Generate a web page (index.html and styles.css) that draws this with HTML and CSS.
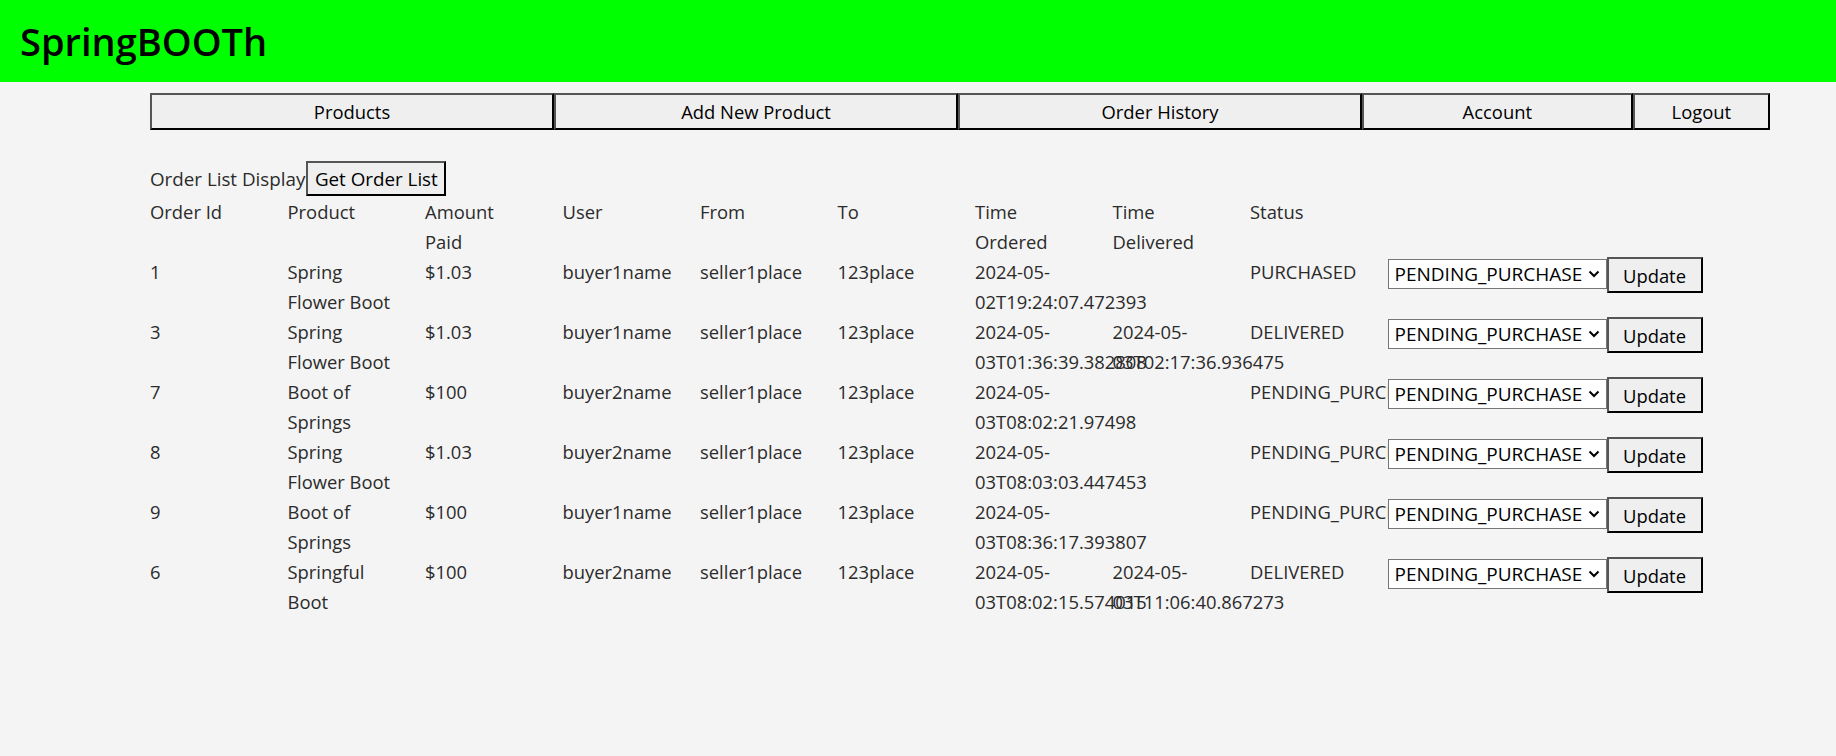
FILE: index.html
```html
<!DOCTYPE html>
<html lang="en">
<head>
<meta charset="utf-8">
<title>SpringBOOTh</title>
<link rel="stylesheet" href="styles.css">
</head>
<body>
<header class="topbar">
  <h1 class="brand">SpringBOOTh</h1>
</header>
<main class="content">
  <nav class="nav">
    <button class="nav-btn wide">Products</button>
    <button class="nav-btn wide">Add New Product</button>
    <button class="nav-btn wide">Order History</button>
    <button class="nav-btn mid">Account</button>
    <button class="nav-btn narrow">Logout</button>
  </nav>

  <div class="toolbar">
    <span class="toolbar-label">Order List Display</span>
    <button class="btn get-btn">Get Order List</button>
  </div>

  <div class="orders">
    <div class="row">
      <div class="cell">Order Id</div>
      <div class="cell">Product</div>
      <div class="cell">Amount Paid</div>
      <div class="cell">User</div>
      <div class="cell">From</div>
      <div class="cell">To</div>
      <div class="cell">Time Ordered</div>
      <div class="cell">Time Delivered</div>
      <div class="cell">Status</div>
    </div>

    <div class="row">
      <div class="cell">1</div>
      <div class="cell">Spring Flower Boot</div>
      <div class="cell">$1.03</div>
      <div class="cell">buyer1name</div>
      <div class="cell">seller1place</div>
      <div class="cell">123place</div>
      <div class="cell">2024-05-<wbr>02T19:24:07.472393</div>
      <div class="cell"></div>
      <div class="cell">PURCHASED</div>
      <span class="select-wrap"><select class="status-select"><option>PENDING_PURCHASE</option><option>PURCHASED</option><option>DELIVERED</option></select><svg class="chev" width="12" height="8" viewBox="0 0 12 8"><path d="M1.5 1.5 L6 6 L10.5 1.5" fill="none" stroke="#000" stroke-width="2"/></svg></span>
      <button class="btn update-btn">Update</button>
    </div>

    <div class="row">
      <div class="cell">3</div>
      <div class="cell">Spring Flower Boot</div>
      <div class="cell">$1.03</div>
      <div class="cell">buyer1name</div>
      <div class="cell">seller1place</div>
      <div class="cell">123place</div>
      <div class="cell">2024-05-<wbr>03T01:36:39.382808</div>
      <div class="cell">2024-05-<wbr>03T02:17:36.936475</div>
      <div class="cell">DELIVERED</div>
      <span class="select-wrap"><select class="status-select"><option>PENDING_PURCHASE</option><option>PURCHASED</option><option>DELIVERED</option></select><svg class="chev" width="12" height="8" viewBox="0 0 12 8"><path d="M1.5 1.5 L6 6 L10.5 1.5" fill="none" stroke="#000" stroke-width="2"/></svg></span>
      <button class="btn update-btn">Update</button>
    </div>

    <div class="row">
      <div class="cell">7</div>
      <div class="cell">Boot of Springs</div>
      <div class="cell">$100</div>
      <div class="cell">buyer2name</div>
      <div class="cell">seller1place</div>
      <div class="cell">123place</div>
      <div class="cell">2024-05-<wbr>03T08:02:21.97498</div>
      <div class="cell"></div>
      <div class="cell">PENDING_PURCHASE</div>
      <span class="select-wrap"><select class="status-select"><option>PENDING_PURCHASE</option><option>PURCHASED</option><option>DELIVERED</option></select><svg class="chev" width="12" height="8" viewBox="0 0 12 8"><path d="M1.5 1.5 L6 6 L10.5 1.5" fill="none" stroke="#000" stroke-width="2"/></svg></span>
      <button class="btn update-btn">Update</button>
    </div>

    <div class="row">
      <div class="cell">8</div>
      <div class="cell">Spring Flower Boot</div>
      <div class="cell">$1.03</div>
      <div class="cell">buyer2name</div>
      <div class="cell">seller1place</div>
      <div class="cell">123place</div>
      <div class="cell">2024-05-<wbr>03T08:03:03.447453</div>
      <div class="cell"></div>
      <div class="cell">PENDING_PURCHASE</div>
      <span class="select-wrap"><select class="status-select"><option>PENDING_PURCHASE</option><option>PURCHASED</option><option>DELIVERED</option></select><svg class="chev" width="12" height="8" viewBox="0 0 12 8"><path d="M1.5 1.5 L6 6 L10.5 1.5" fill="none" stroke="#000" stroke-width="2"/></svg></span>
      <button class="btn update-btn">Update</button>
    </div>

    <div class="row">
      <div class="cell">9</div>
      <div class="cell">Boot of Springs</div>
      <div class="cell">$100</div>
      <div class="cell">buyer1name</div>
      <div class="cell">seller1place</div>
      <div class="cell">123place</div>
      <div class="cell">2024-05-<wbr>03T08:36:17.393807</div>
      <div class="cell"></div>
      <div class="cell">PENDING_PURCHASE</div>
      <span class="select-wrap"><select class="status-select"><option>PENDING_PURCHASE</option><option>PURCHASED</option><option>DELIVERED</option></select><svg class="chev" width="12" height="8" viewBox="0 0 12 8"><path d="M1.5 1.5 L6 6 L10.5 1.5" fill="none" stroke="#000" stroke-width="2"/></svg></span>
      <button class="btn update-btn">Update</button>
    </div>

    <div class="row">
      <div class="cell">6</div>
      <div class="cell">Springful Boot</div>
      <div class="cell">$100</div>
      <div class="cell">buyer2name</div>
      <div class="cell">seller1place</div>
      <div class="cell">123place</div>
      <div class="cell">2024-05-<wbr>03T08:02:15.574015</div>
      <div class="cell">2024-05-<wbr>03T11:06:40.867273</div>
      <div class="cell">DELIVERED</div>
      <span class="select-wrap"><select class="status-select"><option>PENDING_PURCHASE</option><option>PURCHASED</option><option>DELIVERED</option></select><svg class="chev" width="12" height="8" viewBox="0 0 12 8"><path d="M1.5 1.5 L6 6 L10.5 1.5" fill="none" stroke="#000" stroke-width="2"/></svg></span>
      <button class="btn update-btn">Update</button>
    </div>
  </div>
</main>
</body>
</html>
```

FILE: styles.css
```css
html, body {
  margin: 0;
  padding: 0;
}

body {
  background: #f4f4f4;
  font-family: "Open Sans", "Noto Sans", sans-serif;
  font-size: 18.4px;
  line-height: 30px;
  color: #2b2b2b;
  min-height: 756px;
}

.topbar {
  background: #00ff00;
  height: 82px;
  box-sizing: border-box;
  padding-left: 20px;
  display: flex;
  align-items: center;
}

.brand {
  margin: 0;
  font-size: 38px;
  font-weight: 600;
  line-height: 1;
  color: #000;
  letter-spacing: 0;
}

.content {
  padding-left: 150px;
}

.btn,
.nav-btn {
  font-family: inherit;
  font-size: 18.4px;
  color: #000;
  background: #efefef;
  border-style: solid;
  border-width: 2px;
  border-color: #555 #000 #000 #555;
  border-radius: 0;
  padding: 0;
  margin: 0;
  box-sizing: border-box;
  cursor: pointer;
}

.nav {
  display: flex;
  width: 1620px;
  margin-top: 11px;
}

.nav-btn {
  height: 37px;
  min-width: 0;
}

.nav-btn.wide { flex: 3 1 0; }
.nav-btn.mid { flex: 2 1 0; }
.nav-btn.narrow { flex: 1 1 0; }

.toolbar {
  display: flex;
  align-items: center;
  margin-top: 31px;
  height: 35px;
  margin-bottom: 1px;
}

.toolbar-label {
  white-space: nowrap;
  font-size: 18.8px;
}

.get-btn {
  height: 35px;
  width: 140px;
  margin-left: 1px;
  font-size: 18.8px;
}

.orders {
  display: flex;
  flex-direction: column;
}

.row {
  display: flex;
  align-items: flex-start;
  min-height: 60px;
}

.cell {
  flex: none;
  width: 137.5px;
  box-sizing: border-box;
  padding-right: 34px;
  white-space: normal;
}

.select-wrap {
  position: relative;
  flex: none;
  margin-top: 2px;
  width: 219px;
  height: 30px;
  background: #fff;
}

.status-select {
  appearance: none;
  -webkit-appearance: none;
  width: 219px;
  height: 30px;
  box-sizing: border-box;
  border: 1px solid #767676;
  border-radius: 0;
  background: #fff;
  color: #000;
  font-family: inherit;
  font-size: 19px;
  padding: 0 20px 0 6px;
  margin: 0;
  display: block;
}

.chev {
  position: absolute;
  right: 7px;
  top: 11px;
  pointer-events: none;
}

.update-btn {
  width: 96px;
  height: 36px;
  flex: none;
}
```
